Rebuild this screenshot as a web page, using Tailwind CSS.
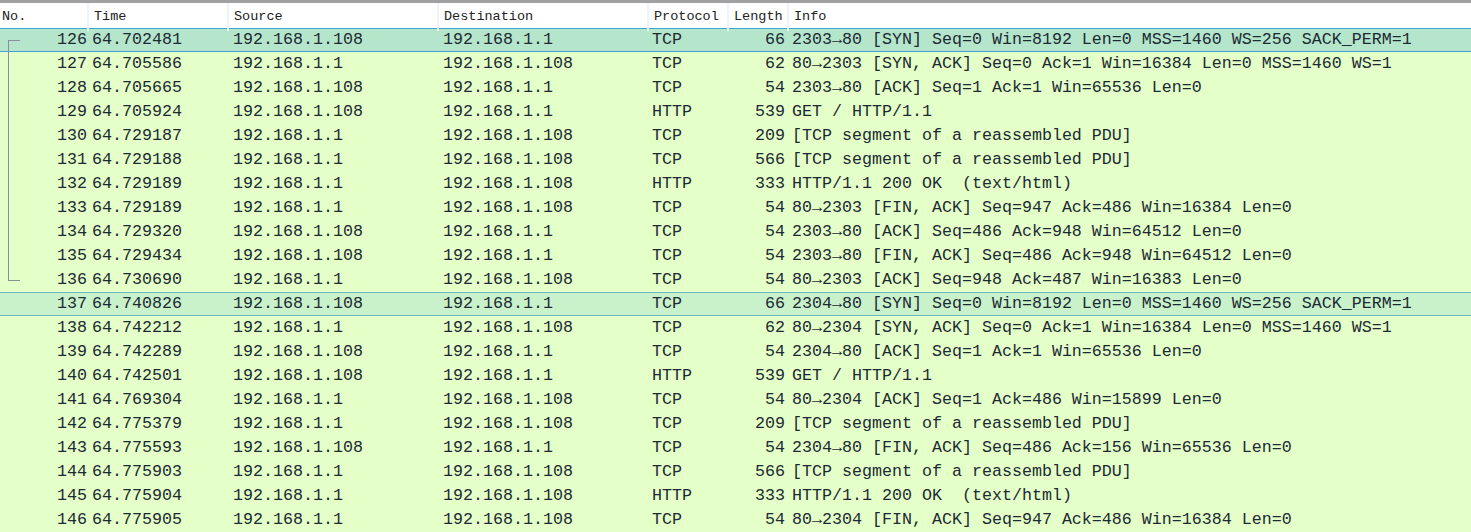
<!DOCTYPE html>
<html lang="en">
  <head>
    <meta charset="utf-8" />
    <title>Packet list</title>
    <script src="https://cdn.jsdelivr.net/npm/@tailwindcss/browser@4"></script>
  </head>
  <body class="bg-[#e4ffc7] overflow-hidden">
    <div class="relative w-[1471px] h-[532px] overflow-hidden">
      <!-- header -->
      <div class="h-[3px] bg-[#a0a0a0]"></div>
      <div class="grid grid-cols-[89px_140px_210px_210px_80px_60px_1fr] h-[25px] bg-white items-center font-['Liberation_Mono',monospace] text-[13.5px] text-[#222]">
        <div class="pl-[2px] h-full leading-[28px] border-r-2 border-[#eef4fc]">No.</div>
        <div class="pl-[5px] h-full leading-[28px] border-r-2 border-[#eef4fc]">Time</div>
        <div class="pl-[5px] h-full leading-[28px] border-r-2 border-[#eef4fc]">Source</div>
        <div class="pl-[5px] h-full leading-[28px] border-r-2 border-[#eef4fc]">Destination</div>
        <div class="pl-[5px] h-full leading-[28px] border-r-2 border-[#eef4fc]">Protocol</div>
        <div class="pl-[5px] h-full leading-[28px] border-r-2 border-[#eef4fc]">Length</div>
        <div class="pl-[5px] h-full leading-[28px]">Info</div>
      </div>
      <div id="rows"></div>
      <!-- conversation bracket -->
      <div class="absolute left-[8px] top-[40px] w-[12px] h-[241px] border-l border-t border-b border-[#8a8f98]"></div>
    </div>
    <script>
      var rows = [
        [126,"64.702481","192.168.1.108","192.168.1.1","TCP",66,"2303→80 [SYN] Seq=0 Win=8192 Len=0 MSS=1460 WS=256 SACK_PERM=1"],
        [127,"64.705586","192.168.1.1","192.168.1.108","TCP",62,"80→2303 [SYN, ACK] Seq=0 Ack=1 Win=16384 Len=0 MSS=1460 WS=1"],
        [128,"64.705665","192.168.1.108","192.168.1.1","TCP",54,"2303→80 [ACK] Seq=1 Ack=1 Win=65536 Len=0"],
        [129,"64.705924","192.168.1.108","192.168.1.1","HTTP",539,"GET / HTTP/1.1"],
        [130,"64.729187","192.168.1.1","192.168.1.108","TCP",209,"[TCP segment of a reassembled PDU]"],
        [131,"64.729188","192.168.1.1","192.168.1.108","TCP",566,"[TCP segment of a reassembled PDU]"],
        [132,"64.729189","192.168.1.1","192.168.1.108","HTTP",333,"HTTP/1.1 200 OK  (text/html)"],
        [133,"64.729189","192.168.1.1","192.168.1.108","TCP",54,"80→2303 [FIN, ACK] Seq=947 Ack=486 Win=16384 Len=0"],
        [134,"64.729320","192.168.1.108","192.168.1.1","TCP",54,"2303→80 [ACK] Seq=486 Ack=948 Win=64512 Len=0"],
        [135,"64.729434","192.168.1.108","192.168.1.1","TCP",54,"2303→80 [FIN, ACK] Seq=486 Ack=948 Win=64512 Len=0"],
        [136,"64.730690","192.168.1.1","192.168.1.108","TCP",54,"80→2303 [ACK] Seq=948 Ack=487 Win=16383 Len=0"],
        [137,"64.740826","192.168.1.108","192.168.1.1","TCP",66,"2304→80 [SYN] Seq=0 Win=8192 Len=0 MSS=1460 WS=256 SACK_PERM=1"],
        [138,"64.742212","192.168.1.1","192.168.1.108","TCP",62,"80→2304 [SYN, ACK] Seq=0 Ack=1 Win=16384 Len=0 MSS=1460 WS=1"],
        [139,"64.742289","192.168.1.108","192.168.1.1","TCP",54,"2304→80 [ACK] Seq=1 Ack=1 Win=65536 Len=0"],
        [140,"64.742501","192.168.1.108","192.168.1.1","HTTP",539,"GET / HTTP/1.1"],
        [141,"64.769304","192.168.1.1","192.168.1.108","TCP",54,"80→2304 [ACK] Seq=1 Ack=486 Win=15899 Len=0"],
        [142,"64.775379","192.168.1.1","192.168.1.108","TCP",209,"[TCP segment of a reassembled PDU]"],
        [143,"64.775593","192.168.1.108","192.168.1.1","TCP",54,"2304→80 [FIN, ACK] Seq=486 Ack=156 Win=65536 Len=0"],
        [144,"64.775903","192.168.1.1","192.168.1.108","TCP",566,"[TCP segment of a reassembled PDU]"],
        [145,"64.775904","192.168.1.1","192.168.1.108","HTTP",333,"HTTP/1.1 200 OK  (text/html)"],
        [146,"64.775905","192.168.1.1","192.168.1.108","TCP",54,"80→2304 [FIN, ACK] Seq=947 Ack=486 Win=16384 Len=0"]
      ];
      var html = "";
      rows.forEach(function (r) {
        var bg = "border-transparent";
        if (r[0] == 126) bg = "bg-[#b5e6cb] border-[#3fa3d8]";
        if (r[0] == 137) bg = "bg-[#c9f2cb] border-[#6db8c8]";
        html += '<div class="grid grid-cols-[88px_141px_210px_210px_80px_56px_1fr] h-[24px] border-t border-b ' + bg + ' items-center font-[\'Liberation_Mono\',monospace] text-[16.67px] leading-[20px] text-[#1c2a35] whitespace-pre">'
          + '<div class="text-right pr-[1px]">' + r[0] + '</div>'
          + '<div class="pl-[4px]">' + r[1] + '</div>'
          + '<div class="pl-[4px]">' + r[2] + '</div>'
          + '<div class="pl-[4px]">' + r[3] + '</div>'
          + '<div class="pl-[3px]">' + r[4] + '</div>'
          + '<div class="text-right">' + r[5] + '</div>'
          + '<div class="pl-[7px]">' + r[6] + '</div>'
          + '</div>';
      });
      document.getElementById("rows").innerHTML = html;
    </script>
  </body>
</html>
